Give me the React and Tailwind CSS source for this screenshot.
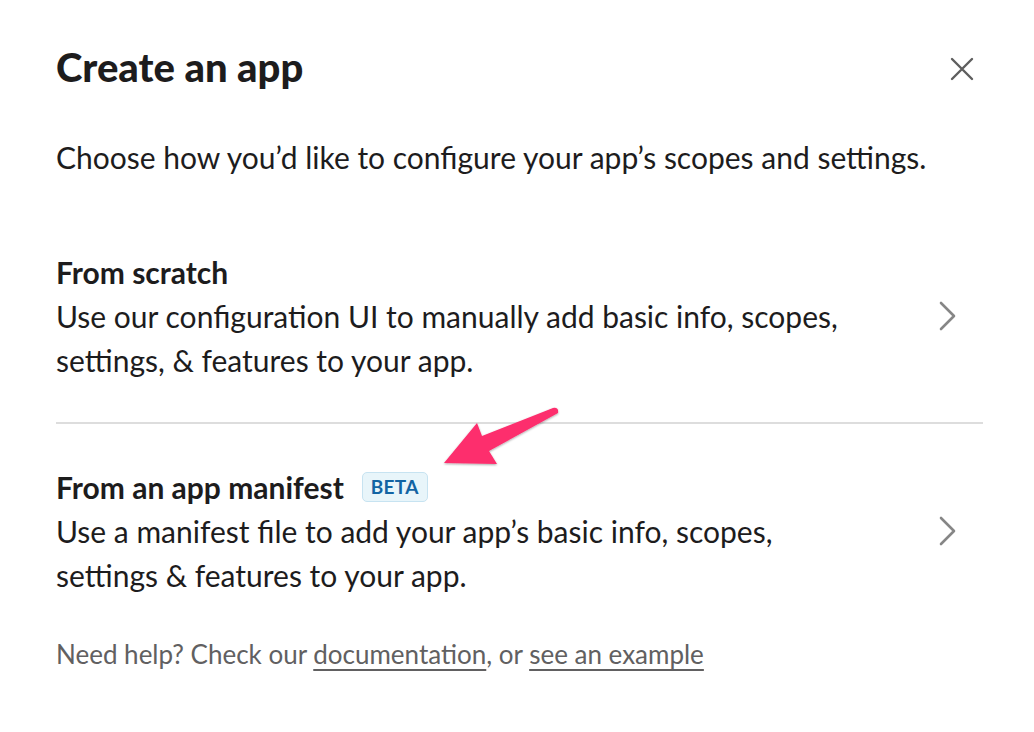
import React from 'react';

const Chevron = () => (
  <svg width="20" height="32" viewBox="0 0 20 32" fill="none" className="shrink-0">
    <path d="M3 3 L16 16 L3 29" stroke="#868686" strokeWidth="2.6" strokeLinecap="round" strokeLinejoin="round" />
  </svg>
);

const Option = ({ title, badge, lines }) => (
  <button className="w-full flex items-center justify-between text-left cursor-pointer">
    <div>
      <div className="flex items-center gap-[18px]">
        <h2 className="text-[30px] leading-[44px] font-bold text-[#1d1c1d]">{title}</h2>
        {badge && (
          <span className="px-[8px] h-[30px] flex items-center rounded-[5px] bg-[#e8f5fa] border border-[#c7e3f1] text-[#1264a3] text-[19px] font-bold tracking-[0.3px]">
            {badge}
          </span>
        )}
      </div>
      {lines.map((l) => (
        <p key={l} className="text-[30px] leading-[44px] text-[#1d1c1d]">{l}</p>
      ))}
    </div>
    <div className="mr-[25px]">
      <Chevron />
    </div>
  </button>
);

export default function App() {
  return (
    <div className="relative w-[1034px] h-[732px] bg-white overflow-hidden" style={{ fontFamily: 'Lato, "Noto Sans", sans-serif' }}>
      <div className="pl-[56px] pr-[51px] pt-[43px]">
        <div className="flex items-center justify-between">
          <h1 className="text-[40px] leading-[48px] font-black text-[#1d1c1d]">Create an app</h1>
          <button className="mr-[9px] mt-[4px]">
            <svg width="24" height="24" viewBox="0 0 24 24" fill="none">
              <path d="M2 2 L22 22 M22 2 L2 22" stroke="#5e5e5e" strokeWidth="2.4" strokeLinecap="round" />
            </svg>
          </button>
        </div>
        <p className="mt-[44px] text-[30px] leading-[44px] text-[#1d1c1d]">
          Choose how you’d like to configure your app’s scopes and settings.
        </p>
        <div className="mt-[71px] pb-[40px] border-b-2 border-[#dddddd]">
          <Option
            title="From scratch"
            lines={['Use our configuration UI to manually add basic info, scopes,', 'settings, & features to your app.']}
          />
        </div>
        <div className="pt-[41px]">
          <Option
            title="From an app manifest"
            badge="BETA"
            lines={['Use a manifest file to add your app’s basic info, scopes,', 'settings & features to your app.']}
          />
        </div>
        <p className="mt-[39px] text-[26px] leading-[36px] text-[#616061]">
          Need help? Check our <a className="underline underline-offset-[5px]" href="#">documentation</a>, or{' '}
          <a className="underline underline-offset-[5px]" href="#">see an example</a>
        </p>
      </div>
      <svg className="absolute inset-0 pointer-events-none" width="1034" height="732" viewBox="0 0 1034 732">
        <defs>
          <filter id="sh" x="-20%" y="-20%" width="140%" height="140%">
            <feDropShadow dx="0" dy="1" stdDeviation="1.2" floodColor="#000" floodOpacity="0.35" />
          </filter>
        </defs>
        <path
          d="M444 463 L477 423 L482 436 L553 408 Q559 407 558 413 L489 451 L497 464 Z"
          fill="#fd2d6d"
          filter="url(#sh)"
        />
      </svg>
    </div>
  );
}
